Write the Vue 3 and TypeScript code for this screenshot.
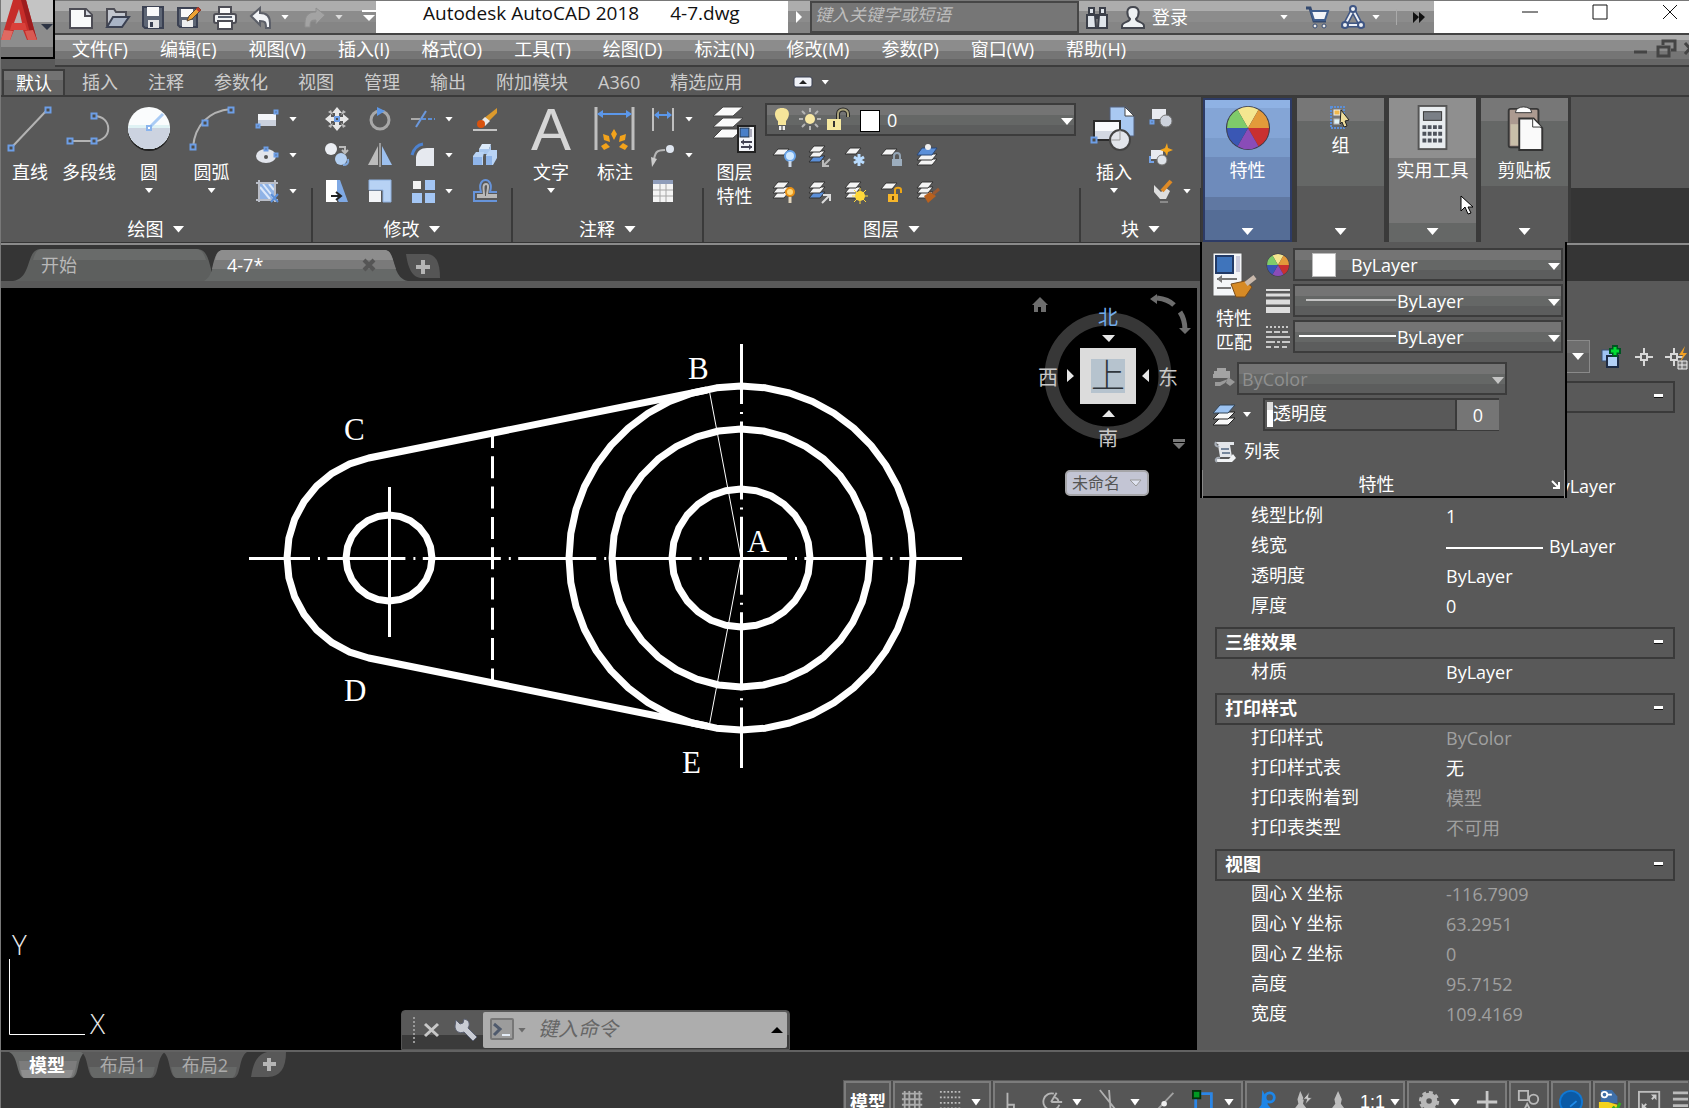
<script setup lang="ts">
import { defineComponent, h, ref } from 'vue'

const sheet = (x: number, y: number, fill = '#f4f4f4') =>
  `<path d="M${x + 5} ${y}h11l-5 6h-11z" fill="${fill}" stroke="#333" stroke-width="1"/>`
const stack = (top = '#f4f4f4', bottom = '#f4f4f4') =>
  sheet(1, 13, bottom) + sheet(1, 8) + sheet(1, 3, top)
const grip = (x: number, y: number, s = 5) =>
  `<rect x="${x - s / 2}" y="${y - s / 2}" width="${s}" height="${s}" fill="#4c4c4c" stroke="#6d9ee6" stroke-width="2"/>`

const wheelSlices = () => {
  const colors = ['#f5e690', '#e39a3a', '#c93030', '#8a4cb8', '#3a57b4', '#7fcb6a']
  return colors
    .map((c, i) => {
      const a = ((i * 60 - 120) * Math.PI) / 180
      const b = ((i * 60 - 60) * Math.PI) / 180
      const p = (t: number) => `${(23 + 21 * Math.cos(t)).toFixed(1)} ${(23 + 21 * Math.sin(t)).toFixed(1)}`
      return `<path d="M23 23L${p(a)}A21 21 0 0 1 ${p(b)}z" fill="${c}"/>`
    })
    .join('')
}

const icons: Record<string, string> = {
  fresh: '<path d="M1 4h16l6 6v13h-22z" fill="#f8fafa" stroke="#4d4d55" stroke-width="2"/><path d="M16 4v7h7" fill="#d6dae2" stroke="#4d4d55" stroke-width="2"/>',
  open: '<path d="M2 21v-17h7l2 3h10v4" fill="#c3c7cf" stroke="#4d4d55" stroke-width="2"/><path d="M2 22l6-10h16l-7 10z" fill="#a9b4c6" stroke="#3b4152" stroke-width="2"/>',
  save: '<path d="M2 2h20v21h-18l-2-2z" fill="#5e6675" stroke="#3b4152" stroke-width="2"/><path d="M6 2h12v9h-12z" fill="#fafafa"/><path d="M7 15h11v8h-11z" fill="#e6e6e6"/><path d="M9 17h3v5h-3z" fill="#3b4152"/>',
  saveAs: '<path d="M1 3h19v19h-17l-2-2z" fill="#5e6675" stroke="#3b4152" stroke-width="2"/><path d="M4 4h12v8h-12z" fill="#fafafa"/><path d="M5 15h11v7h-11z" fill="#eee"/><path d="M10 16l2-5 9-9 3 3-9 9z" fill="#eda234" stroke="#5a4630" stroke-width="1"/><path d="M20 3l3 3" stroke="#c03a2b" stroke-width="3"/>',
  print: '<path d="M6 2h12v7h-12z" fill="#fafafa" stroke="#4d4d55" stroke-width="2"/><rect x="1" y="9" width="22" height="9" rx="2" fill="#f0f2f4" stroke="#4d4d55" stroke-width="2"/><path d="M5 12h14" stroke="#59606e" stroke-width="2"/><path d="M5 16h14v8h-14z" fill="#fff" stroke="#4d4d55" stroke-width="2"/>',
  undo: '<path d="M2 11l9-8v5c7 0 10 4 10 10v5h-4c0-6-1-7-6-7v4z" fill="#f2f4f7" stroke="#5c5f68" stroke-width="2"/>',
  redo: '<path d="M22 10l-9-7v4c-8 0-11 4-11 11v4h5c0-6 1-7 6-7v4z" fill="#a3a3a3" stroke="#8f8f8f"/>',
  customize: '<path d="M5 6h14" stroke="#fff" stroke-width="2"/><path d="M6 10h12l-6 6z" fill="#fff"/>',
  find: '<path d="M4 3h5v6h-5zM15 3h5v6h-5zM2 10h8l1 13h-9zM14 10h8v13h-9z" fill="#dfe4ea" stroke="#3b3f49" stroke-width="2"/><path d="M10 9h4v5h-4z" fill="#3b3f49"/>',
  user: '<path d="M12 2c8 0 6 9 3 12 0 3 8 3 8 7v2h-22v-2c0-4 8-4 8-7-3-3-5-12 3-12z" fill="#eef1f3" stroke="#44474f" stroke-width="2"/>',
  cart: '<path d="M1 3h4l4 13h12" fill="none" stroke="#344a70" stroke-width="3"/><path d="M6 6h17l-3 9h-11z" fill="#f2f4f8" stroke="#3f5d8c" stroke-width="2"/><circle cx="10" cy="21" r="2" fill="#eee" stroke="#344a70"/><circle cx="19" cy="21" r="2" fill="#eee" stroke="#344a70"/>',
  share: '<path d="M12 5l-8 15h16z" fill="none" stroke="#3f5684" stroke-width="5"/><path d="M12 5l-8 15h16z" fill="none" stroke="#eef1f6" stroke-width="2"/><g fill="#eef1f6" stroke="#3f5684" stroke-width="2"><circle cx="12" cy="4" r="3"/><circle cx="4" cy="20" r="3"/><circle cx="20" cy="20" r="3"/></g>',
  line: '<path d="M5 41L40 4" stroke="#b3b3b3" stroke-width="2"/>' + grip(4, 42) + grip(41, 4),
  polyline: '<path d="M4 35h24c19 0 19-25 0-25" fill="none" stroke="#b3b3b3" stroke-width="2"/>' + grip(4, 35) + grip(28, 35) + grip(28, 10),
  circle: '<circle cx="23" cy="24" r="21" fill="#222"/><circle cx="23" cy="22" r="21" fill="#fafcfd"/><path d="M3 19h40l1 3a21 21 0 0 1-42 0z" fill="#dff2f4"/><path d="M2 22h42a21 21 0 0 1-42 0z" fill="#ccd3e0"/><path d="M23 22l14-14" stroke="#a9cbf5" stroke-width="3"/><rect x="21" y="20" width="4" height="4" fill="#fff" stroke="#8ab4ec" stroke-width="2"/>',
  arc: '<path d="M4 41c2-22 16-36 38-38" fill="none" stroke="#b3b3b3" stroke-width="2"/>' + grip(4, 41) + grip(16, 17) + grip(42, 4),
  rect: '<rect x="3" y="7" width="18" height="12" fill="#f2f4f8"/><rect x="3" y="13" width="18" height="6" fill="#cbd1dd"/>' + grip(21, 5, 3) + grip(3, 19, 3),
  ellipse: '<ellipse cx="11" cy="13" rx="10" ry="7" fill="#e2e5ec"/><circle cx="11" cy="14" r="2" fill="#555"/>' + grip(11, 6, 3) + grip(21, 12, 3),
  hatch: '<path d="M4 4h16v16h-16z" fill="#8fb3e6"/><path d="M5 8l10 12M8 5l11 14M14 5l5 6" stroke="#dbe8fa" stroke-width="2"/><path d="M1 4h22M1 21h22M4 1v22M20 1v22" stroke="#b9bdc7" stroke-width="2"/><path d="M16 15l7 8M23 15l-7 8" stroke="#5b8fd8" stroke-width="2"/>',
  move: '<g fill="#e8e8e8"><path d="M12 0l5 6h-3v3h-4v-3h-3zM12 24l5-6h-3v-3h-4v3h-3zM0 12l6-5v3h3v4h-3v3zM24 12l-6-5v3h-3v4h3v3z"/><path d="M3 5l3-2 2 5zM21 5l-3-2-2 5zM3 19l3 2 2-5zM21 19l-3 2-2-5z" fill="#bdbdbd"/></g>' + grip(12, 12, 4),
  rotate: '<circle cx="12" cy="13" r="9" fill="none" stroke="#a8a8a8" stroke-width="3"/><path d="M9 0l8 4-8 5z" fill="#5d97e6"/>',
  trim: '<path d="M0 12h9" stroke="#aaa" stroke-width="2"/><path d="M11 12h13" stroke="#5d8fd6" stroke-width="2" stroke-dasharray="4 2"/><path d="M5 20L15 4" stroke="#6b98dc" stroke-width="2"/>',
  erase: '<path d="M24 1v5L14 16l-4-4z" fill="#dc9a2c"/><path d="M12 10l5 4-5 5-5-4z" fill="#e9e9e9"/><circle cx="8" cy="17" r="4" fill="#d8520e"/><path d="M0 23h24" stroke="#c4c4c4" stroke-width="2"/>',
  copy: '<circle cx="6" cy="6" r="6" fill="#eceff4"/><circle cx="16" cy="16" r="6" fill="#b4d0f2"/><path d="M14 4h6v5M17 7l3 3 3-3" fill="none" stroke="#bbb" stroke-width="2"/><path d="M18 22c4 0 6-2 5-6" stroke="#7fa7dd" stroke-width="2" fill="none"/>',
  mirror: '<path d="M10 3v19h-10z" fill="#bcbcbc"/><path d="M14 3v19h10z" fill="#9dc0ee"/><path d="M12 0v24" stroke="#ddd"/>',
  fillet: '<path d="M5 23v-9c1-6 5-9 11-9h7v18z" fill="#e6e9ef"/><path d="M1 12C3 5 6 2 12 1" stroke="#4d82d0" stroke-width="3" fill="none"/>',
  explode: '<path d="M6 6l3-5h9l-2 5v5h-10z" fill="#dcebfb"/><path d="M6 6h10l2-5v6l-2 4h-10z" fill="#a9c8ef"/><path d="M0 13l3-4h8l-1 5v8h-10zM13 12l4-5h7v8l-4 7h-7z" fill="#b9d4f6"/><path d="M0 14h9v8h-9zM13 13h6v9h-6z" fill="#8fb5ea"/>',
  stretch: '<path d="M1 1h14l8 22h-9z" fill="#7fa9e4"/><path d="M1 1h11v22h-11z" fill="#fff"/><path d="M6 17h9M11 13l5 4-5 4" fill="none" stroke="#222" stroke-width="2"/>',
  scale: '<path d="M1 1h22v22h-8v-12h-14z" fill="#b7d2f4" stroke="#8fb1df"/><path d="M1 12h12v11h-12z" fill="#f2f4f7"/>',
  array: '<rect x="2" y="2" width="8" height="8" fill="#f2f2f2"/><rect x="14" y="1" width="10" height="10" fill="#a4c6f4"/><rect x="1" y="14" width="10" height="10" fill="#a4c6f4"/><rect x="14" y="14" width="10" height="10" fill="#a4c6f4"/>',
  offset: '<path d="M24 22h-23v-9h7c-5-16 14-16 9 0h7" fill="none" stroke="#6794da" stroke-width="2"/><path d="M24 18h-19v-2h6c0-4-2-11 2-11s1 7 1 11h10" fill="none" stroke="#b9b9b9" stroke-width="2"/>',
  text: '<text x="3" y="44" font-size="60" fill="#d6d6d6" font-family="Liberation Sans, sans-serif">A</text>',
  dimBig: '<path d="M4 1v43M41 1v43" stroke="#bfbfbf" stroke-width="3"/><path d="M6 8h33" stroke="#5b97ea" stroke-width="2"/><path d="M5 8l6-4v8zM40 8l-6-4v8z" fill="#5b97ea"/><g fill="#f3a31b"><path d="M22 23l3 5-3 6-3-6zM11 28l6 2 1 6-6-2zM34 28l-6 2-1 6 6-2zM9 40l5-3 4 4-6 3zM36 40l-5-3-4 4 6 3z"/></g>',
  dim: '<path d="M2 1v23M22 1v23" stroke="#bfbfbf" stroke-width="2"/><path d="M4 8h16" stroke="#5b97ea" stroke-width="2"/><path d="M3 8l5-4v8zM21 8l-5-4v8z" fill="#5b97ea"/>',
  leader: '<path d="M2 21c2-12 3-14 12-14" fill="none" stroke="#b5b5b5" stroke-width="2"/><path d="M0 14l6 2-5 8z" fill="#ccc"/><circle cx="19" cy="6" r="4" fill="#dfe6f0"/>',
  table: '<rect x="2" y="1" width="20" height="22" fill="#f4f4f4"/><path d="M2 3h20" stroke="#8f9dba" stroke-width="4"/><path d="M2 11h20M2 17h20M9 5v18M15 5v18" stroke="#a6a6a6"/>',
  layerProps: '<g stroke="#444" fill="#fafafa"><path d="M10 23h21l-10 9h-20z"/><path d="M11 12h20l-10 9h-20z"/><path d="M11 1h20l-10 9h-20z"/></g><rect x="26" y="20" width="17" height="26" fill="#f4f6fa" stroke="#222" stroke-width="2"/><rect x="28" y="22" width="9" height="9" fill="#4a80c8" stroke="#234"/><path d="M39 23v8" stroke="#aab" stroke-width="2"/><path d="M29 36h11M29 41h11" stroke="#445" stroke-width="2"/><path d="M32 33l-3 3 3 3zM37 38l3 3-3 3z" fill="#445"/>',
  layOff: sheet(1, 6) + '<circle cx="18" cy="13" r="5" fill="#cfe8ff" stroke="#6aa5ea" stroke-width="2"/><path d="M18 18v6" stroke="#cbd8ea" stroke-width="3"/>',
  layIso: stack('#f4f4f4', '#5b8fd8') + '<path d="M22 16l-7 7M15 17v6h6" stroke="#bbb" stroke-width="2" fill="none"/>',
  layFreeze: sheet(1, 5) + '<path d="M15 11v12M10 14l10 6M20 14l-10 6" stroke="#b9dcff" stroke-width="3"/>',
  layLock: sheet(1, 6) + '<path d="M14 16v-3c0-4 6-4 6 0v3" fill="none" stroke="#93a4b4" stroke-width="2"/><rect x="12" y="16" width="10" height="7" fill="#9cadbd"/>',
  layCur: '<path d="M6 16h15l-5 6h-15z" fill="#f4f4f4" stroke="#333"/><path d="M6 11h15l-5 6h-15z" fill="#f4f4f4" stroke="#333"/><path d="M6 5h15l-5 7h-15z" fill="#5b8fd8" stroke="#2b4878"/><circle cx="12" cy="4" r="3" fill="#f0f0f0"/>',
  layOn: stack() + '<circle cx="18" cy="13" r="4" fill="#ffd87a" stroke="#e89116" stroke-width="2"/><path d="M18 18v6" stroke="#e3d6bd" stroke-width="3"/>',
  layUniso: stack('#f4f4f4', '#5b8fd8') + '<path d="M14 24l7-7M15 16h7v6" stroke="#ddd" stroke-width="2" fill="none"/>',
  layThaw: stack() + '<circle cx="16" cy="17" r="5" fill="#ffd83a"/><path d="M16 9v16M8 17h16M10 11l12 12M22 11l-12 12" stroke="#ffd83a" stroke-width="1"/>',
  layUnlock: sheet(1, 4) + '<path d="M15 16v-5c0-3 6-3 6 0v3" fill="none" stroke="#eda616" stroke-width="2"/><rect x="8" y="15" width="10" height="8" fill="#f7b62a"/><path d="M13 17v4" stroke="#6b4a10" stroke-width="2"/>',
  layMatch: stack() + '<path d="M8 17l6-4 6 4-8 7z" fill="#b9611e"/><path d="M17 15l6-5" stroke="#9a5a33" stroke-width="3"/>',
  bulb: '<path d="M12 1c9 0 8 9 4 13v4h-8v-4c-4-4-5-13 4-13z" fill="#f6e59a"/><path d="M9 19h6v4h-6z" fill="#eee"/><path d="M12 19v5" stroke="#333"/>',
  sun: '<circle cx="12" cy="12" r="5" fill="#f9e9a4"/><path d="M12 1v4M12 19v4M1 12h4M19 12h4M4 4l3 3M17 17l3 3M20 4l-3 3M7 17l-3 3" stroke="#b5b5b5" stroke-width="2"/>',
  unlock: '<path d="M12 12v-5c0-6 10-6 10 0v3" fill="none" stroke="#262626" stroke-width="4"/><path d="M12 12v-5c0-6 10-6 10 0v3" fill="none" stroke="#aaa37b" stroke-width="2"/><rect x="1" y="12" width="14" height="11" fill="#f6e9a0"/><path d="M8 14v6" stroke="#333" stroke-width="2"/>',
  insert: '<path d="M19 1h16l8 9v20h-24z" fill="#a9c9f2" stroke="#54617a"/><path d="M34 1v9h9z" fill="#fff" stroke="#444"/><path d="M3 15h26v19h-26z" fill="#f8fafc" stroke="#2b2b2b" stroke-width="2"/><path d="M4 25h24v8h-24z" fill="#d3d8e2"/><circle cx="29" cy="34" r="10" fill="#e2e5eb" stroke="#444" stroke-width="2"/><path d="M29 24v10h-9" stroke="#999" fill="none"/>' + grip(3, 34),
  blockMake: '<path d="M3 2h14v10h-14z" fill="#e8eaf0"/><circle cx="17" cy="14" r="6" fill="#cdd2dc" stroke="#777"/>' + grip(3, 15, 3),
  blockEdit: '<path d="M2 7h12v9h-12z" fill="#e8eaf0"/><circle cx="13" cy="17" r="5" fill="#dfe3e9" stroke="#777"/><path d="M18 0l1 5 5 2-5 2-1 4-2-4-5-2 5-2z" fill="#f4a61c"/><path d="M1 13v6h4" stroke="#74a2e6" fill="none" stroke-width="2"/>',
  blockAttr: '<path d="M5 6v7l6 7h6l4-8-4-3-5 4z" fill="#dedede"/><path d="M22 2l-9 10" stroke="#df8a25" stroke-width="4"/><path d="M11 23h8" stroke="#bbb"/>',
  wheel: '<circle cx="23" cy="23" r="22" fill="#3a3a46"/>' + wheelSlices(),
  group: '<path d="M2 2h13v21h-13z" fill="none" stroke="#5b8fd8" stroke-width="2" stroke-dasharray="2 1"/><rect x="5" y="5" width="6" height="5" fill="#f0b84c" stroke="#eee"/><rect x="5" y="14" width="6" height="5" fill="#dff2f4" stroke="#bbb"/><path d="M12 5l8 10-4 1 2 5-3 1-2-5-2 2z" fill="#eedd9c" stroke="#222"/>',
  calc: '<rect x="8" y="1" width="29" height="45" fill="#e9edf0" stroke="#555" stroke-width="2"/><rect x="13" y="7" width="19" height="9" fill="#7a7f86" stroke="#333"/><g stroke="#4e535c" stroke-width="4" stroke-dasharray="4 1.5"><path d="M12 23h21M12 30h21M12 37h21"/></g>',
  clipboard: '<rect x="6" y="4" width="31" height="40" rx="2" fill="#ac9a90" stroke="#373737" stroke-width="2"/><path d="M8 20h9v22h-9z" fill="#c9bfa9"/><path d="M13 8c0-8 17-8 17 0z" fill="#fff" stroke="#333"/><path d="M17 14h15l9 10v23h-24z" fill="#fafafa" stroke="#333" stroke-width="2"/><path d="M31 14v9h9" fill="#fff" stroke="#333"/>',
  matchProps: '<rect x="2" y="2" width="29" height="43" fill="#f4f6f8" stroke="#555"/><rect x="5" y="5" width="17" height="17" fill="#3f74bb" stroke="#223a66" stroke-width="2"/><path d="M25 5h4v16h-4z" fill="#ccd"/><path d="M6 28h20M6 37h14" stroke="#777" stroke-width="2"/><path d="M11 24l-5 4 5 4z" fill="#777"/><path d="M20 33l14-3 7 6-7 10h-9z" fill="#d68a25" stroke="#7a4d1c"/><path d="M35 33l9-7" stroke="#c9b9ac" stroke-width="5"/>',
  weights: '<path d="M0 1h24" stroke="#ddd" stroke-width="2"/><path d="M0 6h24" stroke="#ddd" stroke-width="3"/><path d="M0 13h24" stroke="#ddd" stroke-width="5"/><path d="M0 21h24" stroke="#ddd" stroke-width="6"/>',
  types: '<g stroke="#c8c8c8" stroke-width="2"><path d="M0 2h24" stroke-dasharray="2 2"/><path d="M0 7h24" stroke-dasharray="6 2"/><path d="M0 12h24"/><path d="M0 17h24" stroke-dasharray="9 2 3 2"/><path d="M0 22h24" stroke-dasharray="5 3"/></g>',
  plotStyle: '<path d="M5 1h9v3h4v3h-16v-3h3zM1 7h17v4h-17z" fill="#a3a3a3"/><path d="M3 15h5l8-3-3 4-5 3h-5z" fill="#999"/><path d="M16 10l7 5-5 4-4-3z" fill="#999"/>',
  transparency: '<g stroke="#222"><path d="M8 15h15l-7 7h-15z" fill="#f8f8f8"/><path d="M8 9h15l-7 7h-15z" fill="#f8f8f8"/><path d="M8 2h15l-7 8h-15z" fill="#9cc3f2" stroke="#345"/></g>',
  list: '<path d="M2 3h19v3h-15z" fill="#e3e6ea"/><path d="M5 6h12l2 12h-12z" fill="#e3e6ea"/><path d="M3 20h13l4-5 3 4-4 4h-15z" fill="#f2f4f6"/><path d="M8 10h8M9 14h8" stroke="#76879c" stroke-width="2"/><path d="M3 3c-2 4 2 5 3 4M4 23c-3-2 0-5 3-4" stroke="#a5acb5" fill="none" stroke-width="2"/>',
  quickSel: '<rect x="3" y="5" width="11" height="11" fill="#9fc3f2" stroke="#3c5375"/><rect x="8" y="11" width="11" height="11" fill="#b4d2f7" stroke="#1d2b44" stroke-width="2"/><path d="M16 0v12M10 6h12" stroke="#052" stroke-width="6"/><path d="M16 2v8M12 6h8" stroke="#0d3" stroke-width="3"/>',
  pick: '<path d="M12 3v18M3 12h18" stroke="#d8d8d8" stroke-width="2"/><rect x="9" y="9" width="6" height="6" fill="#595959" stroke="#d8d8d8" stroke-width="2"/>',
  pickAll: '<path d="M9 3v18M0 12h18" stroke="#d8d8d8" stroke-width="2"/><rect x="6" y="9" width="6" height="6" fill="#595959" stroke="#d8d8d8" stroke-width="2"/><path d="M20 1l-6 9h4l-3 7 7-9h-4z" fill="#f2a023"/><path d="M13 16h9v8h-9zM13 20h9M17 16v8" fill="#777" stroke="#eee"/>',
  home: '<path d="M8 0l8 8h-2v7h-5v-5h-3v5h-4v-7h-2z" fill="#6d6d6d"/>',
  wrench: '<path d="M3 2l4 4 3-1 1-4c6 1 6 6 4 9l9 9-4 4-9-9c-5 2-9-1-9-6z" fill="#c9ccd4" stroke="#5a6072"/>',
  prompt: '<rect x="1" y="1" width="22" height="20" rx="1" fill="#9c9c9c" stroke="#777" stroke-width="2"/><path d="M4 6l6 5-6 6" stroke="#4f5a6d" stroke-width="3" fill="none"/><path d="M12 17h8" stroke="#e3ebf5" stroke-width="2"/>',
  grid: '<path d="M1 4h22M1 10h22M1 16h22M1 22h22M4 1v24M9 1v24M15 1v24M20 1v24" stroke="#ababab" stroke-width="2"/>',
  snap: '<g stroke="#bdbdbd" stroke-width="2" stroke-dasharray="2 2"><path d="M1 2h22M1 8h22M1 14h22M1 20h22"/></g>',
  ortho: '<path d="M7 3v19h10M7 16h7v6" fill="none" stroke="#b5b5b5" stroke-width="2"/>',
  polar: '<path d="M21 16A9 9 0 1 1 15 4M12 13h12M12 13l6-10M16 8c3 1 4 3 4 5" fill="none" stroke="#b5b5b5" stroke-width="2"/>',
  iso: '<path d="M2 0l20 25M12 0l2 26" fill="none" stroke="#b0b0b0" stroke-width="2"/>',
  track: '<path d="M3 22L21 3" stroke="#a2a2a2" stroke-width="2"/><circle cx="11" cy="15" r="3" fill="#eee"/>',
  osnap: '<path d="M4 24v-20h17v20" fill="none" stroke="#2b86e6" stroke-width="3"/><rect x="1" y="1" width="8" height="8" fill="#092" stroke="#04300c" stroke-width="2"/>',
  annoVis: '<path d="M9 0l5 9 1 7 8 9h-22l7-9z" fill="#1e86e8"/><circle cx="17" cy="8" r="5" fill="#4d5964" stroke="#1e86e8" stroke-width="3"/>',
  annoAuto: '<path d="M10 1l4 9-1 5 7 9h-19l7-9-1-5z" fill="#bdbdbd"/><path d="M20 2l-7 8h4l-2 6 8-8h-4z" fill="#c8c8c8" stroke="#565656"/>',
  annoScale: '<path d="M12 1l4 9-1 5 7 9h-20l7-9-1-5z" fill="#bdbdbd"/>',
  gear: '<circle cx="12" cy="12" r="6" fill="none" stroke="#b9b9b9" stroke-width="6"/><circle cx="12" cy="12" r="9" fill="none" stroke="#b9b9b9" stroke-width="4" stroke-dasharray="4 3"/>',
  plus: '<path d="M12 1v24M1 13h22" stroke="#c8c8c8" stroke-width="3"/>',
  isolate: '<path d="M2 1h10v10h-10z" fill="none" stroke="#b9b9b9" stroke-width="2"/><circle cx="18" cy="10" r="5" fill="none" stroke="#b9b9b9" stroke-width="2"/><path d="M11 15l5 10h-10z" fill="none" stroke="#b9b9b9" stroke-width="2"/>',
  perf: '<circle cx="13" cy="13" r="13" fill="#1178d4"/><circle cx="13" cy="13" r="11" fill="#0b5aa6"/><path d="M12 18l7-6" stroke="#1f8bea" stroke-width="2"/>',
  python: '<path d="M3 0h12l6 7v7h-18z" fill="#3f6fa8"/><path d="M1 13h10l10 3v10h-20z" fill="#f5d21c"/><circle cx="7" cy="5" r="3" fill="none" stroke="#fff" stroke-width="2"/><path d="M10 5h5" stroke="#fff" stroke-width="2"/><path d="M16 18l4 4 4-8" stroke="#3a2" stroke-width="3" fill="none"/>',
  clean: '<rect x="1" y="2" width="22" height="24" fill="none" stroke="#bdbdbd" stroke-width="2"/><path d="M14 5h6v6zM4 20v-6l6 6z" fill="#ccc"/><path d="M19 6l-4 4M5 19l4-4" stroke="#ccc" stroke-width="2"/>',
  menu: '<path d="M1 3h22M1 10h22M1 17h22" stroke="#bbb" stroke-width="3"/>',
  autocad: '<path d="M0 40L12 0h13l11 40h-10l-4-10h-9l-4 10z" fill="#c62d2a"/><path d="M18 9l-5 14h8z" fill="#b9b0b0"/><path d="M20 0h5l11 40h-5z" fill="#9d1c1e"/><path d="M0 40l3-10 9 1-3 9z" fill="#df6a62"/><path d="M24 31l8-1 4 10h-9z" fill="#d95a52"/><path d="M11 23h13l2 7h-17z" fill="#d9403a"/>',
}

const Glyph = defineComponent({
  props: {
    name: { type: String, required: true },
    size: { type: Number, default: 24 },
    box: { type: String, default: '' },
  },
  setup(props) {
    return () =>
      h('svg', {
        width: props.size,
        height: props.size,
        viewBox: props.box || `0 0 ${props.size} ${props.size}`,
        'aria-hidden': 'true',
        innerHTML: icons[props.name],
      })
  },
})

const menus = ['文件(F)', '编辑(E)', '视图(V)', '插入(I)', '格式(O)', '工具(T)', '绘图(D)', '标注(N)', '修改(M)', '参数(P)', '窗口(W)', '帮助(H)']
const ribbonTabs = ['默认', '插入', '注释', '参数化', '视图', '管理', '输出', '附加模块', 'A360', '精选应用']
const activeRibbon = ref('默认')

interface Small { icon: string; drop?: boolean }
const drawBig = [
  { icon: 'line', label: '直线' },
  { icon: 'polyline', label: '多段线' },
  { icon: 'circle', label: '圆', drop: true },
  { icon: 'arc', label: '圆弧', drop: true },
]
const drawSmall: Small[] = [{ icon: 'rect', drop: true }, { icon: 'ellipse', drop: true }, { icon: 'hatch', drop: true }]
const modify: Small[] = [
  { icon: 'move' }, { icon: 'rotate' }, { icon: 'trim', drop: true }, { icon: 'erase' },
  { icon: 'copy' }, { icon: 'mirror' }, { icon: 'fillet', drop: true }, { icon: 'explode' },
  { icon: 'stretch' }, { icon: 'scale' }, { icon: 'array', drop: true }, { icon: 'offset' },
]
const annotate: Small[] = [{ icon: 'dim', drop: true }, { icon: 'leader', drop: true }, { icon: 'table' }]
const layerTools = ['layOff', 'layIso', 'layFreeze', 'layLock', 'layCur', 'layOn', 'layUniso', 'layThaw', 'layUnlock', 'layMatch']
const blockTools: Small[] = [{ icon: 'blockMake' }, { icon: 'blockEdit' }, { icon: 'blockAttr', drop: true }]

interface Row { label: string; value: string; muted?: boolean; line?: boolean }
const sections: { title: string; rows: Row[] }[] = [
  {
    title: '三维效果',
    rows: [{ label: '材质', value: 'ByLayer' }],
  },
  {
    title: '打印样式',
    rows: [
      { label: '打印样式', value: 'ByColor', muted: true },
      { label: '打印样式表', value: '无' },
      { label: '打印表附着到', value: '模型', muted: true },
      { label: '打印表类型', value: '不可用', muted: true },
    ],
  },
  {
    title: '视图',
    rows: [
      { label: '圆心 X 坐标', value: '-116.7909', muted: true },
      { label: '圆心 Y 坐标', value: '63.2951', muted: true },
      { label: '圆心 Z 坐标', value: '0', muted: true },
      { label: '高度', value: '95.7152', muted: true },
      { label: '宽度', value: '109.4169', muted: true },
    ],
  },
]
const general: Row[] = [
  { label: '线型', value: 'ByLayer', line: true },
  { label: '线型比例', value: '1' },
  { label: '线宽', value: 'ByLayer', line: true },
  { label: '透明度', value: 'ByLayer' },
  { label: '厚度', value: '0' },
]

// Circles are tessellated the way the viewport regenerates them.
const facets = (cx: number, cy: number, r: number, n: number) =>
  Array.from({ length: n }, (_, i) => {
    const a = (i / n) * Math.PI * 2 - Math.PI / 2
    return `${(cx + r * Math.cos(a)).toFixed(1)},${(cy + r * Math.sin(a)).toFixed(1)}`
  }).join(' ')

const outline = (() => {
  const tilt = Math.asin(70 / 352)
  const from = -Math.PI / 2 - tilt
  const sweep = Math.PI - 2 * tilt
  const pts = ['707,390']
  for (let i = 0; i <= 14; i++) {
    const a = from - (sweep * i) / 14
    pts.push(`${(389 + 102 * Math.cos(a)).toFixed(1)},${(558 + 102 * Math.sin(a)).toFixed(1)}`)
  }
  pts.push('707,726')
  return pts.join(' ')
})()

const letters = [
  { t: 'B', x: 688, y: 379 }, { t: 'C', x: 344, y: 440 }, { t: 'D', x: 344, y: 701 },
  { t: 'E', x: 682, y: 773 }, { t: 'A', x: 747, y: 552 },
]

interface Stat { icon?: string; text?: string; drop?: boolean; w: number }
const status: { w: number; items: Stat[] }[] = [
  { w: 47, items: [{ text: '模型', w: 44 }] },
  { w: 98, items: [{ icon: 'grid', w: 36 }, { icon: 'snap', drop: true, w: 58 }] },
  { w: 250, items: [{ icon: 'ortho', w: 36 }, { icon: 'polar', drop: true, w: 60 }, { icon: 'iso', drop: true, w: 56 }, { icon: 'track', w: 38 }, { icon: 'osnap', drop: true, w: 56 }] },
  { w: 160, items: [{ icon: 'annoVis', w: 38 }, { icon: 'annoAuto', w: 36 }, { icon: 'annoScale', w: 36 }, { text: '1:1', drop: true, w: 46 }] },
  { w: 100, items: [{ icon: 'gear', drop: true, w: 60 }, { icon: 'plus', w: 38 }] },
  { w: 40, items: [{ icon: 'isolate', w: 36 }] },
  { w: 40, items: [{ icon: 'perf', w: 36 }] },
  { w: 33, items: [{ icon: 'python', w: 30 }] },
  { w: 70, items: [{ icon: 'clean', w: 40 }, { icon: 'menu', w: 28 }] },
]
</script>

<template>
  <div class="app">
    <header class="top">
      <button class="logo" aria-label="应用程序菜单"><Glyph name="autocad" :size="40" box="0 0 40 40" /><i class="dn dark"></i></button>
      <div class="bars">
        <div class="titlebar">
          <nav class="qat">
            <button v-for="n in ['fresh', 'open', 'save', 'saveAs', 'print']" :key="n" :aria-label="n"><Glyph :name="n" /></button>
            <button class="pair" aria-label="undo"><Glyph name="undo" /><i class="dn"></i></button>
            <button class="pair" aria-label="redo"><Glyph name="redo" /><i class="dn pale"></i></button>
            <button aria-label="customize"><Glyph name="customize" /></button>
          </nav>
          <div class="caption"><span>Autodesk AutoCAD 2018</span><span>4-7.dwg</span></div>
          <button class="more" aria-label="展开"><i class="rt"></i></button>
          <input class="search" placeholder="键入关键字或短语" aria-label="搜索" />
          <div class="account">
            <Glyph name="find" /><Glyph name="user" class="who" />
            <button class="login">登录<i class="dn"></i></button>
            <Glyph name="cart" /><Glyph name="share" class="share" /><i class="dn"></i>
            <span class="rule"></span>
            <svg width="12" height="11" viewBox="0 0 12 11"><path d="M0 0l6 5-6 6zM6 0l6 5-6 6z" fill="#111" /></svg>
          </div>
          <div class="window">
            <button aria-label="最小化"><svg width="16" height="16"><path d="M0 8h16" stroke="#111" /></svg></button>
            <button aria-label="最大化"><svg width="16" height="16"><path d="M1 1h14v14h-14z" fill="none" stroke="#111" /></svg></button>
            <button aria-label="关闭"><svg width="16" height="16"><path d="M1 1l14 14M15 1L1 15" stroke="#111" /></svg></button>
          </div>
        </div>
        <nav class="menubar">
          <button v-for="m in menus" :key="m">{{ m }}</button>
          <svg class="mdi" width="56" height="18" viewBox="0 0 56 18">
            <path d="M0 12h13" stroke="#444" stroke-width="3" />
            <path d="M29 5v-4h12v9h-4M24 7h11v9h-11z" fill="none" stroke="#444" stroke-width="3" />
            <path d="M51 3l10 11M61 3L51 14" stroke="#444" stroke-width="3" />
          </svg>
        </nav>
      </div>
    </header>

    <nav class="tabs">
      <button v-for="t in ribbonTabs" :key="t" :class="{ on: t === activeRibbon }" @click="activeRibbon = t">{{ t }}</button>
      <button class="fold" aria-label="最小化功能区">
        <svg width="20" height="12" viewBox="0 0 20 12"><rect x="1" y="1" width="18" height="10" rx="2" fill="#f0f2f8" stroke="#3b4152" /><path d="M6 8h8l-4-4z" fill="#222" /></svg><i class="dn"></i>
      </button>
    </nav>

    <section class="ribbon">
      <div class="panel draw">
        <div class="tools">
          <button v-for="b in drawBig" :key="b.icon" class="big"><Glyph :name="b.icon" :size="46" /><span>{{ b.label }}</span><i v-if="b.drop" class="dn"></i></button>
          <div class="small">
            <button v-for="s in drawSmall" :key="s.icon" :aria-label="s.icon"><Glyph :name="s.icon" /><i class="dn"></i></button>
          </div>
        </div>
        <button class="name">绘图<i class="dn wide"></i></button>
      </div>
      <div class="panel modify">
        <div class="tools">
          <div class="small four">
            <button v-for="s in modify" :key="s.icon" :aria-label="s.icon"><Glyph :name="s.icon" /><i v-if="s.drop" class="dn"></i></button>
          </div>
        </div>
        <button class="name">修改<i class="dn wide"></i></button>
      </div>
      <div class="panel annotate">
        <div class="tools">
          <button class="big"><Glyph name="text" :size="46" /><span>文字</span><i class="dn"></i></button>
          <button class="big"><Glyph name="dimBig" :size="46" /><span>标注</span></button>
          <div class="small">
            <button v-for="s in annotate" :key="s.icon" :aria-label="s.icon"><Glyph :name="s.icon" /><i v-if="s.drop" class="dn"></i></button>
          </div>
        </div>
        <button class="name">注释<i class="dn wide"></i></button>
      </div>
      <div class="panel layers">
        <div class="tools">
          <button class="big"><Glyph name="layerProps" :size="46" /><span>图层<br />特性</span></button>
          <div class="layercol">
            <div class="combo">
              <select class="layersel" aria-label="图层"><option>0</option></select>
              <span class="over layerstate"><Glyph name="bulb" /><Glyph name="sun" /><Glyph name="unlock" /><b class="swatch"></b></span>
            </div>
            <div class="layergrid">
              <button v-for="n in layerTools" :key="n" :aria-label="n"><Glyph :name="n" /></button>
            </div>
          </div>
        </div>
        <button class="name">图层<i class="dn wide"></i></button>
      </div>
      <div class="panel block">
        <div class="tools">
          <button class="big"><Glyph name="insert" :size="46" /><span>插入</span><i class="dn"></i></button>
          <div class="small">
            <button v-for="s in blockTools" :key="s.icon" :aria-label="s.icon"><Glyph :name="s.icon" /><i v-if="s.drop" class="dn"></i></button>
          </div>
        </div>
        <button class="name">块<i class="dn wide"></i></button>
      </div>

      <div class="folded">
        <div class="slot">
          <button class="chip active"><Glyph name="wheel" :size="46" /><span>特性</span><i class="dn wide"></i></button>
          <div class="popup">
            <div class="ptop">
              <button class="match"><Glyph name="matchProps" :size="46" /><span>特性<br />匹配</span></button>
              <div class="pcombos">
                <div class="prow"><Glyph name="wheel" box="0 0 46 46" />
                  <div class="combo"><select class="c1" aria-label="对象颜色"><option>ByLayer</option></select><span class="over sw"><b class="swatch plain"></b></span></div></div>
                <div class="prow"><Glyph name="weights" />
                  <div class="combo"><select class="c2" aria-label="线宽"><option>ByLayer</option></select><span class="over ln thin"></span></div></div>
                <div class="prow"><Glyph name="types" />
                  <div class="combo"><select class="c2" aria-label="线型"><option>ByLayer</option></select><span class="over ln"></span></div></div>
              </div>
            </div>
            <div class="plot"><Glyph name="plotStyle" />
              <div class="combo off"><select class="c3" aria-label="打印样式" disabled><option>ByColor</option></select></div></div>
            <div class="trans"><Glyph name="transparency" /><i class="dn"></i>
              <div class="slide"><label for="alpha">透明度</label><input id="alpha" type="range" value="0" min="0" max="90" /></div>
              <input class="num" type="text" value="0" aria-label="透明度值" /></div>
            <button class="listbtn"><Glyph name="list" />列表</button>
            <div class="pfoot"><span>特性</span>
              <svg width="9" height="9" viewBox="0 0 9 9"><path d="M1 1l6 6M8 2v6h-6" stroke="#fff" stroke-width="2" fill="none" /></svg></div>
          </div>
        </div>
        <button class="chip group"><Glyph name="group" /><span>组</span><i class="dn wide"></i></button>
        <button class="chip hover"><Glyph name="calc" :size="46" box="0 0 46 48" /><span>实用工具</span><i class="dn wide"></i>
          <svg class="cursor" width="14" height="20" viewBox="0 0 14 20"><path d="M1 1v15l4-4 3 7 3-1-3-6h5z" fill="#fff" stroke="#000" /></svg>
        </button>
        <button class="chip"><Glyph name="clipboard" :size="46" box="0 0 46 48" /><span>剪贴板</span><i class="dn wide"></i></button>
      </div>
    </section>

    <nav class="docs">
      <button class="doc">
        <svg viewBox="0 0 198 32" preserveAspectRatio="none"><path d="M0 32c20-3 12-32 28-32h155c10 0 12 8 15 20v12z" fill="#5d5f5e" /><path d="M20 11c2-7 4-11 9-11h153c6 0 9 4 11 11z" fill="#696b6a" /></svg>
        <span>开始</span>
      </button>
      <button class="doc current">
        <svg viewBox="0 0 204 32" preserveAspectRatio="none"><path d="M0 32c12-6 8-31 20-31h160c12 0 7 28 24 31z" fill="#666968" /><path d="M8 20c3-14 5-19 12-19h160c8 0 8 8 12 19z" fill="#7a7a7a" /><path d="M11 11c2-8 4-10 9-10h160c6 0 7 5 9 10z" fill="#8d8d8d" /></svg>
        <span>4-7*</span>
        <svg class="x" width="12" height="12" viewBox="0 0 12 12"><path d="M1 1l10 10M11 1L1 11" stroke="#555" stroke-width="4" /></svg>
      </button>
      <button class="add" aria-label="新图形"><svg width="34" height="24" viewBox="0 0 34 24"><path d="M0 0h20c10 0 14 8 14 24h-18c-10 0-14-10-16-24z" fill="#555" /><path d="M17 6v14M10 13h14" stroke="#b5b5b5" stroke-width="4" /></svg></button>
    </nav>

    <main class="work">
      <div class="canvas">
        <svg class="plan" width="1196" height="762" viewBox="1 288 1196 762">
          <g fill="none" stroke="#fff">
            <g stroke-width="7" stroke-linejoin="round">
              <polygon :points="facets(741, 558, 172, 44)" />
              <polygon :points="facets(741, 558, 129, 36)" />
              <polygon :points="facets(741, 558, 69, 28)" />
              <polygon :points="facets(389, 558, 43, 24)" />
              <polyline :points="outline" />
            </g>
            <g stroke-width="3" stroke-dasharray="78 8 2 7.4">
              <path d="M249 558.5H962" stroke-dashoffset="17" />
              <path d="M741.5 344V768" stroke-dashoffset="18" />
            </g>
            <path d="M389.5 487V637" stroke-width="3" />
            <path d="M492.5 434V682" stroke-width="3" stroke-dasharray="22 8.3" stroke-dashoffset="8" />
            <path d="M709 389L741 558L709 727" />
            <path d="M9.500 959V1034.500H85" />
          </g>
          <text v-for="l in letters" :key="l.t" class="mark" :x="l.x" :y="l.y">{{ l.t }}</text>
          <text class="axis" x="12" y="955">Y</text>
          <text class="axis" x="90" y="1034">X</text>
        </svg>

        <svg class="cube" width="170" height="210" viewBox="1025 290 170 210">
          <circle cx="1108" cy="376" r="57" fill="none" stroke="#373737" stroke-width="13" />
          <path d="M1080 348h56v56h-56z" fill="#dcdcdc" /><path d="M1091 359h34v34h-34z" fill="#b6c3ce" />
          <g fill="#e6e6e6"><path d="M1102 335h13l-6 7zM1102 417h13l-6-7zM1067 369v13l7-6zM1149 369v13l-7-6z" /></g>
          <text x="1108" y="388" class="face">上</text>
          <text x="1108" y="325" class="dir north">北</text><text x="1108" y="446" class="dir">南</text>
          <text x="1048" y="385" class="dir">西</text><text x="1168" y="385" class="dir">东</text>
          <g transform="translate(1032 297)" v-html="icons.home"></g>
          <path d="M1157 298c9 1 13 3 17 7M1180 312c4 6 5 11 5 18" fill="none" stroke="#6d6d6d" stroke-width="5" />
          <path d="M1150 299l7-5v10zM1179 328h12l-6 6z" fill="#6d6d6d" />
          <path d="M1173 439h12v3h-12zM1173 443h12l-6 6z" fill="#777" />
        </svg>
        <button class="ucs">未命名<svg width="13" height="8" viewBox="0 0 13 8"><path d="M1 1h11l-5 6z" fill="#dfe3f0" stroke="#999" /></svg></button>

        <div class="command">
          <span class="handle"></span>
          <button aria-label="关闭"><svg width="15" height="14" viewBox="0 0 15 14"><path d="M1 1l13 12M14 1L1 13" stroke="#c8c8c8" stroke-width="3" /></svg></button>
          <button aria-label="自定义"><Glyph name="wrench" /></button>
          <div class="entry"><Glyph name="prompt" /><i class="dn grey"></i>
            <input placeholder="键入命令" aria-label="命令" /><i class="up"></i></div>
        </div>
      </div>

      <aside class="props">
        <div class="pick">
          <button class="dd" aria-label="对象"><i class="dn wide"></i></button>
          <Glyph name="quickSel" /><Glyph name="pick" /><Glyph name="pickAll" />
        </div>
        <section class="first">
          <h3><span></span><i></i></h3>
          <table>
            <tbody>
              <tr v-for="r in general" :key="r.label"><th>{{ r.label }}</th><td><span v-if="r.line" class="stroke"></span>{{ r.value }}</td></tr>
            </tbody>
          </table>
        </section>
        <section v-for="s in sections" :key="s.title">
          <h3><span>{{ s.title }}</span><i></i></h3>
          <table>
            <tbody>
              <tr v-for="r in s.rows" :key="r.label"><th>{{ r.label }}</th><td :class="{ muted: r.muted }">{{ r.value }}</td></tr>
            </tbody>
          </table>
        </section>
      </aside>
    </main>

    <footer class="bottom">
      <nav class="sheets">
        <button class="sel">
          <svg viewBox="0 0 76 26" preserveAspectRatio="none"><path d="M0 0h76c-9 6-5 26-14 26h-46c-9 0-6-22-16-26z" fill="#6a6c6b" /><path d="M10 9h58c-2 9-2 17-8 17h-44c-5 0-5-8-6-17z" fill="#7c7c7c" /><path d="M12 18h52c-1 5-2 8-5 8h-43c-3 0-3-4-4-8z" fill="#8e8e8e" /></svg><span>模型</span></button>
        <button v-for="n in ['布局1', '布局2']" :key="n">
          <svg viewBox="0 0 82 26" preserveAspectRatio="none"><path d="M0 0h82c-9 6-5 26-14 26h-54c-9 0-6-22-14-26z" fill="#5a5a5a" /><path d="M8 15h64c-1 7-2 11-6 11h-52c-4 0-5-5-6-11z" fill="#666867" /></svg><span>{{ n }}</span></button>
        <button class="plusb" aria-label="新布局"><svg width="36" height="25" viewBox="0 0 36 25"><path d="M16 0h19c0 16-6 25-18 25h-17c2-14 6-22 16-25z" fill="#585858" /><path d="M18 6v13M12 12h13" stroke="#b5b5b5" stroke-width="4" /></svg></button>
      </nav>
      <div class="status">
        <div v-for="(g, i) in status" :key="i" class="cell" :style="{ width: g.w + 'px' }">
          <button v-for="(s, j) in g.items" :key="j" :style="{ width: s.w + 'px' }" :aria-label="s.icon || s.text">
            <Glyph v-if="s.icon" :name="s.icon" box="0 0 26 26" /><span v-else :class="{ scale: s.drop }">{{ s.text }}</span><i v-if="s.drop" class="dn"></i>
          </button>
        </div>
      </div>
    </footer>
  </div>
</template>

<style>
body { background: #353535; overflow: hidden; }
</style>

<style scoped>
.app { min-height: 100vh; display: flex; flex-direction: column; box-sizing: border-box; font: 18px/24px "Open Sans", "Noto Sans CJK SC", sans-serif; color: #fff; background: #353535; border-left: 1px solid #787878; }
.app *, .app *::before { box-sizing: border-box; }
button { font: inherit; color: inherit; background: none; border: 0; padding: 0; margin: 0; display: flex; align-items: center; white-space: nowrap; }
input, select { font: inherit; color: inherit; margin: 0; border-radius: 0; }
svg { flex: none; display: block; overflow: visible; }
.dn { flex: none; width: 8px; height: 5px; background: #fff; clip-path: polygon(0 0, 100% 0, 50% 100%); }
.dn.wide { width: 12px; height: 7px; }
.dn.dark { width: 12px; height: 6px; background: #2d3444; }
.dn.pale { background: #ddd; }
.dn.grey { background: #6a6a6a; }
.up { flex: none; width: 12px; height: 6px; background: #000; clip-path: polygon(50% 0, 100% 100%, 0 100%); }
.rt { width: 6px; height: 12px; background: #fff; clip-path: polygon(0 0, 100% 50%, 0 100%); }

.top { display: flex; height: 67px; background: #595959; }
.logo { width: 54px; height: 59px; border: solid #000; border-width: 0 2px 2px 0; background: linear-gradient(#c4c4c4 0 22px, #8d8d8d 22px 47px, #737373 47px); align-items: flex-start; justify-content: flex-start; }
.logo .dn { margin-top: 24px; }
.bars { flex: 1; min-width: 0; }
.titlebar { display: flex; height: 35px; border-top: 1px solid #787878; border-bottom: 2px solid #444; background: linear-gradient(#adadad 0 10px, #8c8c8c 10px 21px, #858585 21px); }
.qat { display: flex; align-items: center; width: 321px; padding-left: 14px; gap: 12px; }
.qat .pair { gap: 8px; margin-right: 2px; }
.caption { width: 412px; background: #fff; color: #111; font-size: 19px; display: flex; gap: 31px; padding: 0 0 9px 47px; align-items: center; white-space: nowrap; }
.more { width: 22px; justify-content: center; }
.search { flex: 1; min-width: 0; border: 2px solid #464646; background: #767676; padding: 0 3px 5px; font-size: 17px; font-style: italic; outline: 0; }
.search::placeholder { color: #bdbdbd; opacity: 1; }
.account { width: 355px; display: flex; align-items: center; padding-left: 6px; }
.who { margin-left: 12px; }
.login { width: 136px; justify-content: space-between; margin: 0 17px 0 7px; }
.share { margin: 0 7px 0 12px; }
.rule { width: 1px; height: 16px; background: #aaa; margin: 0 16px; }
.window { width: 255px; background: #fff; display: flex; justify-content: space-between; align-items: flex-start; padding: 3px 11px 0 88px; }
.menubar { display: flex; align-items: center; height: 32px; gap: 32px; padding: 0 0 2px 17px; border-bottom: 2px solid #3c3c3c; background: linear-gradient(#adadad 0 5px, #8c8c8c 5px 16px, #757575 16px 24px, #666 24px); overflow: hidden; }
.mdi { margin-left: auto; margin-right: -1px; }

.tabs { display: flex; align-items: flex-end; height: 30px; background: #595959; border-bottom: 2px solid #3a3a3a; padding-left: 1px; color: #ccc; }
.tabs button { padding: 0 15px; height: 26px; }
.tabs .on { border: 2px solid #3c3c3c; border-bottom: 0; padding: 0 12px; color: #fff; background: linear-gradient(#737373 0 9px, #646464 9px); width: 63px; margin-right: 2px; }
.tabs .fold { gap: 8px; padding-left: 36px; }

.ribbon { display: flex; height: 148px; border-bottom: 2px solid #8b8b8b; background: linear-gradient(#595959 0 91px, #353535 91px); position: relative; z-index: 2; }
.panel { background: #595959; display: flex; flex-direction: column; height: 145px; border-image: linear-gradient(#595959 0 91px, #3a3a3a 91px) 1; border-width: 0 2px 0 0; border-style: solid; }
.draw { width: 312px; } .modify { width: 200px; } .annotate { width: 191px; } .layers { width: 377px; } .block { width: 119px; border: 0; }
.tools { flex: 1; display: flex; align-items: flex-start; }
.name { height: 26px; justify-content: center; gap: 9px; align-self: center; }
.big { flex-direction: column; width: 60px; padding-top: 9px; text-align: center; }
.big span { margin: 8px 0 4px; }
.draw .big:nth-of-type(1) { width: 58px; }
.draw .big:nth-of-type(4) { width: 65px; }
.annotate .big { width: 64px; }
.annotate .tools { padding-left: 6px; }
.layers .big { width: 61px; }
.block .big { width: 66px; }
.small { display: grid; grid-auto-rows: 36px; margin: 4px 0 0 11px; }
.small button { gap: 10px; }
.annotate .small { margin-left: 4px; }
.block .small { margin-left: 2px; }
.four { grid-template-columns: 43px 43px 62px 24px; margin-left: 12px; }
.layercol { width: 311px; padding-top: 6px; }
.combo { position: relative; width: 100%; height: 33px; }
.combo::after { content: ""; position: absolute; right: 3px; top: 15px; width: 12px; height: 7px; background: #fff; clip-path: polygon(0 0, 100% 0, 50% 100%); pointer-events: none; }
.combo select { appearance: none; width: 100%; height: 100%; border: 2px solid #3c3c3c; background: linear-gradient(#747474 0 10px, #656766 10px 20px, #5c5d5d 20px); color: #fff; opacity: 1; padding: 0; outline: 0; }
.combo .layersel { padding-left: 120px; }
.combo .c1 { padding-left: 56px; } .combo .c2 { padding-left: 102px; } .combo .c3 { padding-left: 3px; color: #8f8f8f; }
.combo.off::after { background: #c4c4c4; }
.over { position: absolute; pointer-events: none; }
.layerstate { left: 5px; top: 4px; display: flex; gap: 4px; }
.swatch { width: 20px; height: 22px; background: #fff; border: 1px solid #000; margin: 3px 0 0 6px; }
.plain { display: block; width: 24px; height: 24px; margin: 0; border-color: #bbb; }
.sw { left: 19px; top: 5px; }
.ln { left: 6px; top: 15px; width: 97px; height: 2px; background: #fff; }
.thin { left: 13px; width: 90px; background: #c4c4c4; }
.layergrid { display: grid; grid-template-columns: repeat(5, 36px); grid-auto-rows: 36px; padding: 1px 0 0 7px; }

.folded { display: flex; gap: 5px; padding: 0 3px 0 2px; background: #3a3a3a; margin-left: 1px; height: 145px; }
.slot { position: relative; }
.chip { position: relative; width: 87px; height: 144px; margin-top: 1px; flex-direction: column; padding: 7px 0; background: linear-gradient(#777 0 23px, #656766 23px 88px, #595959 88px); border: 0; }
.slot .chip { width: 89px; }
.chip span { margin-top: 7px; }
.chip .dn { margin-top: auto; }
.group span { margin-top: 4px; }
.active { border: 2px solid #2d3b66; padding: 5px 0; background: linear-gradient(#8fb2e4 0 8px, #84a5d6 8px 38px, #7a9bcb 38px 57px, #6e8bbb 57px 97px, #6078a2 97px 110px, #556d96 110px); }
.hover { background: linear-gradient(#8f8f8f 0 60px, #767676 60px 125px, #656766 125px); }
.cursor { position: absolute; right: 2px; bottom: 27px; }

.popup { position: absolute; left: -3px; top: 145px; width: 367px; height: 256px; background: #595959; border: 2px solid #000; border-top: 0; padding-top: 6px; }
.ptop { display: flex; align-items: flex-start; }
.match { flex-direction: column; width: 64px; padding-top: 3px; }
.match span { margin-top: 9px; }
.pcombos { flex: 1; display: grid; gap: 3px; padding-right: 2px; }
.prow { display: flex; gap: 3px; align-items: center; }
.plot { display: flex; align-items: center; margin: 8px 0 3px 10px; width: 295px; gap: 1px; }
.trans { display: flex; align-items: center; padding-left: 10px; height: 33px; gap: 7px; }
.slide { position: relative; width: 194px; height: 33px; border: 2px solid #3a3a3a; margin: 0 -7px 0 5px; line-height: 27px; padding-left: 8px; }
.slide input { position: absolute; left: 2px; top: 1px; width: 184px; height: 26px; appearance: none; background: none; }
.slide input::-webkit-slider-thumb { appearance: none; width: 6px; height: 25px; background: linear-gradient(#ddd 0 8px, #fff 8px); }
.num { width: 42px; height: 33px; border: solid #3a3a3a; border-width: 2px 0 1px; background: #757575; text-align: center; padding: 0; }
.listbtn { height: 39px; padding-left: 11px; gap: 7px; }
.pfoot { position: relative; height: 28px; border: solid #888; border-width: 0 1px; display: flex; justify-content: center; align-items: center; padding-right: 14px; }
.pfoot svg { position: absolute; right: 4px; top: 10px; }

.docs { display: flex; align-items: flex-end; height: 36px; padding-left: 12px; background: #353535; }
.doc { position: relative; width: 198px; height: 32px; padding-left: 28px; color: #b8b8b8; }
.doc > svg:first-child { position: absolute; left: 0; top: 0; width: 100%; height: 100%; }
.doc span { position: relative; }
.current { width: 204px; padding: 0 33px 0 23px; margin-left: -7px; color: #fff; justify-content: space-between; }
.doc .x { position: relative; }
.add { margin: 0 0 3px -2px; }

.work { flex: 1; display: flex; border-top: 7px solid #595959; }
.canvas { position: relative; flex: 1; min-width: 0; background: #000; overflow: hidden; }
.plan { position: absolute; left: 0; bottom: 0; }
.mark { font: 31px "Liberation Serif", serif; fill: #fff; }
.axis { font: 300 28px "Open Sans", sans-serif; fill: #e8e8e8; }
.cube { position: absolute; right: 2px; top: 2px; }
.dir { font: 20px "Noto Sans CJK SC", sans-serif; fill: #c8c8c8; text-anchor: middle; }
.north { fill: #72acea; }
.face { font: 300 34px "Noto Sans CJK SC", sans-serif; fill: #30363c; text-anchor: middle; }
.ucs { position: absolute; right: 48px; top: 182px; width: 84px; height: 26px; border: 2px solid #a5a5a8; border-radius: 5px; background: #c3c5d4; color: #555; font-size: 16px; justify-content: center; gap: 9px; }
.command { position: absolute; left: 400px; bottom: 0; width: 389px; height: 40px; display: flex; align-items: center; padding: 2px; gap: 14px; background: linear-gradient(#595959 0 24px, #3b3b3b 24px); border: 1px solid #555; border-radius: 4px 4px 0 0; }
.handle { width: 2px; height: 26px; margin-left: 9px; margin-right: -5px; border-left: 2px dotted #999; }
.entry { margin-left: -8px; flex: 1; min-width: 0; height: 36px; background: #adadad; display: flex; align-items: center; padding: 0 4px 0 7px; gap: 4px; border-radius: 2px; }
.entry input { flex: 1; min-width: 0; border: 0; background: none; outline: 0; font-size: 20px; font-style: italic; padding: 0 0 3px 8px; }
.entry input::placeholder { color: #666; opacity: 1; }

.props { width: 492px; background: #595959; margin-top: -7px; padding: 60px 14px 0 18px; }
.pick { display: flex; justify-content: flex-end; align-items: center; gap: 9px; height: 33px; margin: -1px -14px 8px 0; }
.dd { width: 24px; height: 33px; border: 1px solid #8a8a8a; justify-content: center; background: linear-gradient(#6e6e6e 0 12px, #606060 12px); }
section h3 { margin: 0; height: 32px; border: 2px solid #3a3a3a; display: flex; justify-content: space-between; align-items: center; padding: 0 10px 2px 8px; font-size: 18px; font-weight: 700; }
h3 i { width: 9px; height: 4px; background: #fff; border-bottom: 1px solid #111; }
.props section { margin-bottom: 4px; }
.first h3 { margin-bottom: 60px; }
table { border-collapse: collapse; width: 100%; table-layout: fixed; }
tr { height: 30px; }
th, td { padding: 0; vertical-align: top; text-align: left; font-weight: 400; }
td { padding-top: 1px; }
th { width: 231px; padding-left: 36px; }
.muted { color: #a0a0a0; }
.stroke { display: inline-block; width: 97px; height: 2px; background: #fff; vertical-align: middle; margin-right: 6px; }

.bottom { height: 58px; border-top: 2px solid #626262; display: flex; justify-content: space-between; overflow: hidden; }
.sheets { display: flex; align-items: flex-start; padding-left: 8px; }
.sheets button { position: relative; width: 84px; height: 26px; justify-content: center; color: #aaa; margin-right: -2px; padding-bottom: 1px; }
.sheets button > svg:first-child { position: absolute; left: 0; top: 0; width: 100%; height: 100%; }
.sheets span { position: relative; }
.sheets .sel { width: 76px; margin-right: -4px; color: #fff; font-weight: 700; }
.sheets .plusb { width: 36px; height: 25px; margin-left: 6px; }
.status { display: flex; gap: 2px; height: 44px; margin-top: 28px; background: #4c4c4c; border: 1px solid #595959; width: 846px; overflow: hidden; }
.cell { flex: none; display: flex; height: 40px; border: 2px solid #7c7c7c; border-bottom: 0; background: #565656; }
.cell button { gap: 8px; justify-content: center; flex: none; }
.cell span { font-weight: 700; line-height: 18px; }
.cell .scale { font-weight: 400; font-family: "Liberation Sans", sans-serif; }
.cell .scale + .dn { margin-left: -3px; }
.status .dn { width: 10px; height: 7px; }
</style>
